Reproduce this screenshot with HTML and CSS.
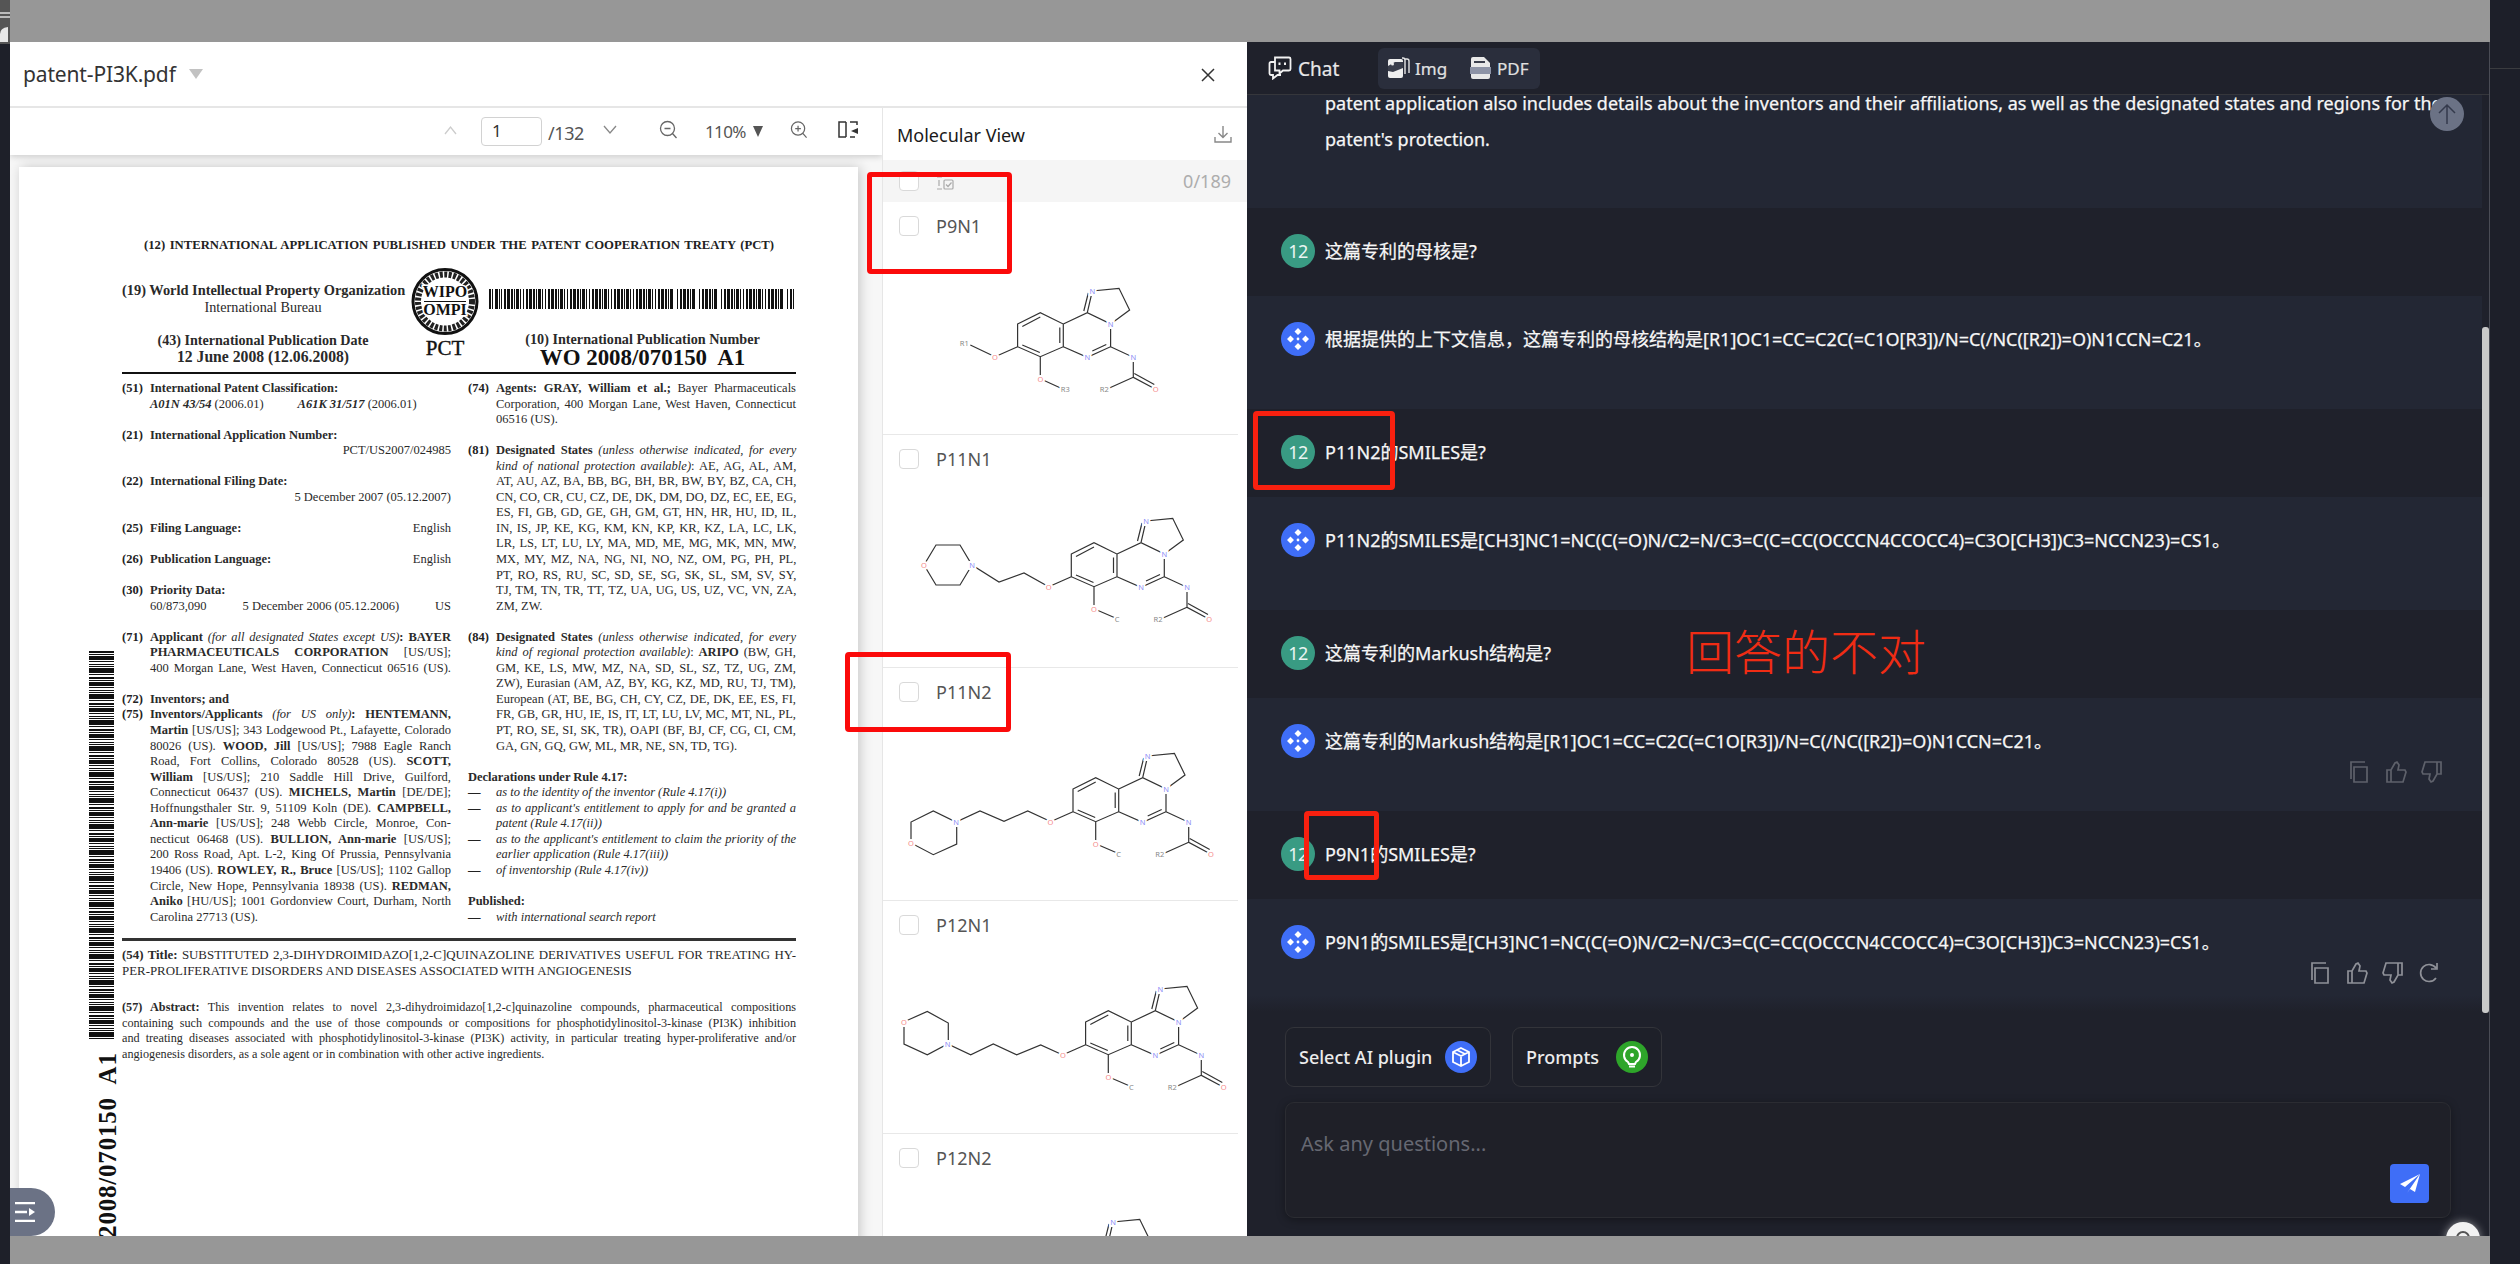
FILE: index.html
```html
<!DOCTYPE html>
<html lang="en">
<head>
<meta charset="utf-8">
<title>patent-PI3K.pdf</title>
<link rel="stylesheet" href="styles.css">
</head>
<body>
<svg class="defs" aria-hidden="true">
  <defs>
    <g id="core">
      <path class="bond" d="M-22.7-11L0-22.3L23-11V11.7L0 21.7L-22.7 11.7ZM-18-8.5L0-18M19.5-7.5V8M-.5 17.5L-18 10M23-11L47-22.3L70.3-11V11.7L47 22.3L23 11.7M47-22.3L52-44L78.7-46.7L89.3-25L70.3-11M43.5-24L48-42M66 9.5L52 16M70.3 11.7L93 22.3V42.3L115.3 54.3M94 38.5L114 49.5M93 42.3L66.3 54.3M-22.7 11.7L-45.3 21.7M0 21.7V43.7"/>
      <text class="at n" x="52" y="-44">N</text>
      <text class="at n" x="70.3" y="-11">N</text>
      <text class="at n" x="47" y="22.3">N</text>
      <text class="at n" x="93" y="22.3">N</text>
      <text class="at o" x="115.3" y="54.3">O</text>
      <text class="at o" x="-45.3" y="21.7">O</text>
      <text class="at o" x="0" y="43.7">O</text>
      <text class="at r" x="64" y="54.3">R2</text>
    </g>
    <g id="logo">
      <path fill="#fff" d="M0-11l3.5 3.5L0-4l-3.5-3.5zM0 4l3.5 3.5L0 11l-3.5-3.5zM-11 0l3.5-3.5L-4 0l-3.5 3.5zM4 0l3.5-3.5L11 0l-3.5 3.5z"/>
      <circle r="1.4" fill="#fff"/>
    </g>
  </defs>
</svg>

<div class="app">
  <div class="strip-left">
    <svg class="corner" width="10" height="44" viewBox="0 0 10 44"><path d="M0 13h10M0 17h10" stroke="#ddd" stroke-width="1.5"/><path d="M0 42V34q0-6 8-7v15z" fill="#e6e6e6"/></svg>
  </div>
  <div class="center">
    <div class="dim-top"></div>
    <div class="modal">
      <section class="doc">
        <header class="doc-head">
          <span class="doc-title">patent-PI3K.pdf</span>
          <span class="doc-caret"></span>
          <svg class="doc-close" width="16" height="16" viewBox="0 0 16 16"><path d="M2 2l12 12M14 2L2 14" stroke="#333" stroke-width="1.5" fill="none"/></svg>
        </header>
        <div class="doc-main">
          <div class="viewer">
            <div class="toolbar">
              <svg class="tb-up" width="15" height="10" viewBox="0 0 15 10"><path d="M2 9l5.5-7L13 9" stroke="#ccc" stroke-width="1.3" fill="none"/></svg>
              <span class="tb-page">1</span>
              <span class="tb-total">/132</span>
              <svg class="tb-down" width="14" height="10" viewBox="0 0 14 10"><path d="M1 1l6 7 6-7" stroke="#888" stroke-width="1.3" fill="none"/></svg>
              <svg class="tb-zout" width="19" height="19" viewBox="0 0 19 19"><circle cx="8.5" cy="8.5" r="7" stroke="#666" fill="none" stroke-width="1.3"/><path d="M5.5 8.5h6M13.5 13.5l4 4.5" stroke="#666" stroke-width="1.3"/></svg>
              <span class="tb-zoom">110%</span>
              <span class="tb-caret"></span>
              <svg class="tb-zin" width="18" height="19" viewBox="0 0 19 19"><circle cx="8.5" cy="8.5" r="7" stroke="#666" fill="none" stroke-width="1.3"/><path d="M5.5 8.5h6M8.5 5.5v6M13.5 13.5l4 4.5" stroke="#666" stroke-width="1.3"/></svg>
              <svg class="tb-sel" width="21" height="17" viewBox="0 0 21 17"><path d="M8 1H1v15h7M8 1v15M12 1h7v3M12 16h5" stroke="#333" stroke-width="1.5" fill="none"/><path d="M20 7l-7 3 7 3z" fill="#333"/></svg>
            </div>
            <div class="viewport">
              <article class="page">
                <div class="side-bar"></div>
                <div class="side-text">WO 2008/070150&nbsp; A1</div>

                <div class="pct-line">(12) INTERNATIONAL APPLICATION PUBLISHED UNDER THE PATENT COOPERATION TREATY (PCT)</div>
                <div class="mast">
                  <div class="mast-left">
                    <div class="m19"><b>(19) World Intellectual Property Organization</b></div>
                    <div class="m-bureau">International Bureau</div>
                    <div class="m43"><b>(43) International Publication Date</b></div>
                    <div class="m-date"><b>12 June 2008 (12.06.2008)</b></div>
                  </div>
                  <div class="mast-mid">
                    <svg class="seal" width="68" height="67" viewBox="0 0 68 67">
                      <ellipse cx="34" cy="33.5" rx="32" ry="32" fill="#fff" stroke="#111" stroke-width="3"/>
                      <ellipse cx="34" cy="33.5" rx="27" ry="27" fill="none" stroke="#222" stroke-width="6" stroke-dasharray="3 1.5"/>
                      <path d="M13 33.5h42" stroke="#111" stroke-width="1"/>
                      <text class="seal-t" x="34" y="29">WIPO</text>
                      <text class="seal-t" x="34" y="47">OMPI</text>
                    </svg>
                    <div class="m-pct">PCT</div>
                  </div>
                  <div class="mast-right">
                    <div class="barcode"></div>
                    <div class="m10"><b>(10) International Publication Number</b></div>
                    <div class="m-wo"><b>WO 2008/070150&nbsp; A1</b></div>
                  </div>
                </div>
                <div class="rule"></div>

                <div class="cols">
                  <div class="col">
                    <div class="it"><span>(51)</span><div><b>International Patent Classification:</b><div class="cls"><span><b><i>A01N 43/54</i></b> (2006.01)</span><span class="cls2"><b><i>A61K 31/517</i></b> (2006.01)</span></div></div></div>
                    <div class="it gap"><span>(21)</span><div><b>International Application Number:</b><div class="rt">PCT/US2007/024985</div></div></div>
                    <div class="it gap"><span>(22)</span><div><b>International Filing Date:</b><div class="rt">5 December 2007 (05.12.2007)</div></div></div>
                    <div class="it gap"><span>(25)</span><div class="sb"><b>Filing Language:</b><span>English</span></div></div>
                    <div class="it gap"><span>(26)</span><div class="sb"><b>Publication Language:</b><span>English</span></div></div>
                    <div class="it gap"><span>(30)</span><div><b>Priority Data:</b><div class="sb"><span>60/873,090</span><span>5 December 2006 (05.12.2006)</span><span>US</span></div></div></div>
                    <div class="it gap"><span>(71)</span><div>
                      <div class="j"><b>Applicant</b> <i>(for all designated States except US)</i><b>: BAYER</b></div>
                      <div class="j"><b>PHARMACEUTICALS CORPORATION</b> [US/US];</div>
                      <div class="j">400 Morgan Lane, West Haven, Connecticut 06516 (US).</div></div></div>
                    <div class="it gap"><span>(72)</span><div><b>Inventors; and</b></div></div>
                    <div class="it"><span>(75)</span><div>
                      <div class="j"><b>Inventors/Applicants</b> <i>(for US only)</i><b>: HENTEMANN,</b></div>
                      <div class="j"><b>Martin</b> [US/US]; 343 Lodgewood Pt., Lafayette, Colorado</div>
                      <div class="j">80026 (US). <b>WOOD, Jill</b> [US/US]; 7988 Eagle Ranch</div>
                      <div class="j">Road, Fort Collins, Colorado 80528 (US). <b>SCOTT,</b></div>
                      <div class="j"><b>William</b> [US/US]; 210 Saddle Hill Drive, Guilford,</div>
                      <div class="j">Connecticut 06437 (US). <b>MICHELS, Martin</b> [DE/DE];</div>
                      <div class="j">Hoffnungsthaler Str. 9, 51109 Koln (DE). <b>CAMPBELL,</b></div>
                      <div class="j"><b>Ann-marie</b> [US/US]; 248 Webb Circle, Monroe, Con-</div>
                      <div class="j">necticut 06468 (US). <b>BULLION, Ann-marie</b> [US/US];</div>
                      <div class="j">200 Ross Road, Apt. L-2, King Of Prussia, Pennsylvania</div>
                      <div class="j">19406 (US). <b>ROWLEY, R., Bruce</b> [US/US]; 1102 Gallop</div>
                      <div class="j">Circle, New Hope, Pennsylvania 18938 (US). <b>REDMAN,</b></div>
                      <div class="j"><b>Aniko</b> [HU/US]; 1001 Gordonview Court, Durham, North</div>
                      <div>Carolina 27713 (US).</div></div></div>
                  </div>
                  <div class="col">
                    <div class="it"><span>(74)</span><div>
                      <div class="j"><b>Agents: GRAY, William et al.;</b> Bayer Pharmaceuticals</div>
                      <div class="j">Corporation, 400 Morgan Lane, West Haven, Connecticut</div>
                      <div>06516 (US).</div></div></div>
                    <div class="it gap"><span>(81)</span><div>
                      <div class="j"><b>Designated States</b> <i>(unless otherwise indicated, for every</i></div>
                      <div class="j"><i>kind of national protection available)</i>: AE, AG, AL, AM,</div>
                      <div class="j">AT, AU, AZ, BA, BB, BG, BH, BR, BW, BY, BZ, CA, CH,</div>
                      <div class="j">CN, CO, CR, CU, CZ, DE, DK, DM, DO, DZ, EC, EE, EG,</div>
                      <div class="j">ES, FI, GB, GD, GE, GH, GM, GT, HN, HR, HU, ID, IL,</div>
                      <div class="j">IN, IS, JP, KE, KG, KM, KN, KP, KR, KZ, LA, LC, LK,</div>
                      <div class="j">LR, LS, LT, LU, LY, MA, MD, ME, MG, MK, MN, MW,</div>
                      <div class="j">MX, MY, MZ, NA, NG, NI, NO, NZ, OM, PG, PH, PL,</div>
                      <div class="j">PT, RO, RS, RU, SC, SD, SE, SG, SK, SL, SM, SV, SY,</div>
                      <div class="j">TJ, TM, TN, TR, TT, TZ, UA, UG, US, UZ, VC, VN, ZA,</div>
                      <div>ZM, ZW.</div></div></div>
                    <div class="it gap"><span>(84)</span><div>
                      <div class="j"><b>Designated States</b> <i>(unless otherwise indicated, for every</i></div>
                      <div class="j"><i>kind of regional protection available)</i>: <b>ARIPO</b> (BW, GH,</div>
                      <div class="j">GM, KE, LS, MW, MZ, NA, SD, SL, SZ, TZ, UG, ZM,</div>
                      <div class="j">ZW), Eurasian (AM, AZ, BY, KG, KZ, MD, RU, TJ, TM),</div>
                      <div class="j">European (AT, BE, BG, CH, CY, CZ, DE, DK, EE, ES, FI,</div>
                      <div class="j">FR, GB, GR, HU, IE, IS, IT, LT, LU, LV, MC, MT, NL, PL,</div>
                      <div class="j">PT, RO, SE, SI, SK, TR), OAPI (BF, BJ, CF, CG, CI, CM,</div>
                      <div>GA, GN, GQ, GW, ML, MR, NE, SN, TD, TG).</div></div></div>
                    <div class="gap"><b>Declarations under Rule 4.17:</b></div>
                    <div class="it"><span>—</span><div><i>as to the identity of the inventor (Rule 4.17(i))</i></div></div>
                    <div class="it"><span>—</span><div>
                      <div class="j"><i>as to applicant's entitlement to apply for and be granted a</i></div>
                      <div><i>patent (Rule 4.17(ii))</i></div></div></div>
                    <div class="it"><span>—</span><div>
                      <div class="j"><i>as to the applicant's entitlement to claim the priority of the</i></div>
                      <div><i>earlier application (Rule 4.17(iii))</i></div></div></div>
                    <div class="it"><span>—</span><div><i>of inventorship (Rule 4.17(iv))</i></div></div>
                    <div class="gap"><b>Published:</b></div>
                    <div class="it"><span>—</span><div><i>with international search report</i></div></div>
                  </div>
                </div>
                <div class="rule2"></div>
                <div class="full">
                  <div class="j"><b>(54) Title:</b> SUBSTITUTED 2,3-DIHYDROIMIDAZO[1,2-C]QUINAZOLINE DERIVATIVES USEFUL FOR TREATING HY-</div>
                  <div>PER-PROLIFERATIVE DISORDERS AND DISEASES ASSOCIATED WITH ANGIOGENESIS</div>
                </div>
                <div class="full abs">
                  <div class="j"><b>(57) Abstract:</b> This invention relates to novel 2,3-dihydroimidazo[1,2-c]quinazoline compounds, pharmaceutical compositions</div>
                  <div class="j">containing such compounds and the use of those compounds or compositions for phosphotidylinositol-3-kinase (PI3K) inhibition</div>
                  <div class="j">and treating diseases associated with phosphotidylinositol-3-kinase (PI3K) activity, in particular treating hyper-proliferative and/or</div>
                  <div>angiogenesis disorders, as a sole agent or in combination with other active ingredients.</div>
                </div>
              </article>
            </div>
            <button class="handle" type="button" aria-label="Toggle">
              <svg width="22" height="20" viewBox="0 0 22 20"><path d="M1 1h20M1 19h20M1 10h12" stroke="#fff" stroke-width="2.4"/><path d="M15 6l6 4-6 4z" fill="#fff"/></svg>
            </button>
          </div>

          <aside class="mol">
            <div class="mol-head">
              <span class="mol-title">Molecular View</span>
              <svg width="18" height="18" viewBox="0 0 18 18"><path d="M9 1v11M4.5 8L9 12.5 13.5 8M1 12v5h16v-5" stroke="#888" stroke-width="1.4" fill="none"/></svg>
            </div>
            <div class="mol-bar">
              <span class="cb"></span>
              <svg class="bar-ic" width="18" height="14" viewBox="0 0 18 14"><rect x="8" y="4" width="9" height="9" rx="1" fill="none" stroke="#aaa" stroke-width="1.2"/><path d="M10 8.5l2 2 3.5-4M1 1h5M1 13h5M3 4v6" stroke="#aaa" stroke-width="1.2" fill="none"/></svg>
              <span class="bar-count">0/189</span>
            </div>
            <div class="mol-list">
              <div class="mrow">
                <div class="mrow-head"><span class="cb"></span><span class="mname">P9N1</span></div>
                <svg class="msvg" width="355" height="185" viewBox="0 0 355 185">
                  <g transform="translate(157.3 85)">
                    <path class="bond" d="M-45.3 21.7L-70 10M0 43.7L23 54.3"/>
                    <use href="#core"/>
                    <text class="at r" x="-76" y="8">R1</text>
                    <text class="at r" x="25" y="54.3">R3</text>
                  </g>
                </svg>
              </div>
              <div class="mrow">
                <div class="mrow-head"><span class="cb"></span><span class="mname">P11N1</span></div>
                <svg class="msvg" width="355" height="185" viewBox="0 0 355 185">
                  <g transform="translate(211 82)">
                    <path class="bond" d="M-45.3 21.7L-70 8L-95 17L-122 0L-134-20H-158L-170 0L-158 20H-134L-122 0M0 43.7L22.6 53.5"/>
                    <use href="#core"/>
                    <text class="at n" x="-122" y="0">N</text>
                    <text class="at o" x="-170" y="0">O</text>
                    <text class="at r" x="23" y="53.5">C</text>
                  </g>
                </svg>
              </div>
              <div class="mrow">
                <div class="mrow-head"><span class="cb"></span><span class="mname">P11N2</span></div>
                <svg class="msvg" width="355" height="185" viewBox="0 0 355 185">
                  <g transform="translate(212.7 84)">
                    <path class="bond" d="M-45.7 21.3L-68 11L-91.7 21.3L-115.7 11L-139.7 22L-162.4 11L-184.7 22V43L-162.4 54.7L-139 44V22M0 43.7L22.6 53.5"/>
                    <use href="#core"/>
                    <text class="at n" x="-139.7" y="22">N</text>
                    <text class="at o" x="-184.7" y="43">O</text>
                    <text class="at r" x="23" y="53.5">C</text>
                  </g>
                </svg>
              </div>
              <div class="mrow">
                <div class="mrow-head"><span class="cb"></span><span class="mname">P12N1</span></div>
                <svg class="msvg" width="355" height="185" viewBox="0 0 355 185">
                  <g transform="translate(225.3 84)">
                    <path class="bond" d="M-46 21.8L-67.6 12L-91.6 21.8L-115 11L-137.6 21.8L-160.6 11L-181 21.8L-204.3 11V-11.2L-181-21.5L-160-10V11M0 43.7L22.6 53.5"/>
                    <use href="#core"/>
                    <text class="at n" x="-160.6" y="11">N</text>
                    <text class="at o" x="-204.3" y="-11.2">O</text>
                    <text class="at r" x="23" y="53.5">C</text>
                  </g>
                </svg>
              </div>
              <div class="mrow">
                <div class="mrow-head"><span class="cb"></span><span class="mname">P12N2</span></div>
                <svg class="msvg" width="355" height="185" viewBox="0 0 355 185">
                  <g transform="translate(178 84)"><use href="#core"/></g>
                </svg>
              </div>
            </div>
          </aside>
        </div>
      </section>

      <section class="chat">
        <header class="chat-head">
          <svg class="chat-ic" width="24" height="24" viewBox="0 0 24 24"><path d="M7 1.5h14a1.5 1.5 0 0 1 1.500 1.500v10a1.500 1.500 0 0 1-1.500 1.500h-6l-3.500 3v-3H7z" fill="none" stroke="#f2f2f2" stroke-width="1.8"/><path d="M7 6H3A1.500 1.500 0 0 0 1.500 7.500v10A1.500 1.500 0 0 0 3 19h2v3.500L9.500 19H13" fill="none" stroke="#f2f2f2" stroke-width="1.8"/><path d="M11.500 6.500v2.500M17 6.500v2.500" stroke="#f2f2f2" stroke-width="2"/></svg>
          <span class="chat-label">Chat</span>
          <div class="pill">
            <svg class="pill-ic1" width="23" height="22" viewBox="0 0 23 22"><path d="M18 2h2a2 2 0 0 1 2 2v12M15 1h1a2 2 0 0 1 2 2v14" fill="none" stroke="#e6e6e6" stroke-width="1.4"/><rect x="1" y="2" width="15" height="19" rx="2" fill="#eee"/><path d="M1 9l7-4h8v6L6 15 1 14z" fill="#3a3e4c"/><circle cx="5.5" cy="7" r="1.5" fill="#eee"/></svg>
            <span class="pill-t img">Img</span>
            <svg class="pill-ic2" width="21" height="24" viewBox="0 0 21 24"><path d="M3 1h11l6 6v4H1V3a2 2 0 0 1 2-2z" fill="#e8e8e8"/><rect x="0" y="11" width="21" height="7" fill="#8d93a6"/><path d="M1 18h19v3a2 2 0 0 1-2 2H3a2 2 0 0 1-2-2z" fill="#e8e8e8"/><rect x="4" y="5" width="11" height="2" fill="#3a3e4c"/></svg>
            <span class="pill-t pdf">PDF</span>
          </div>
        </header>
        <div class="chat-scroll">
          <div class="row ai first">
            <div class="row-text">
              <p class="clip">patent application also includes details about the inventors and their affiliations, as well as the designated states and regions for the</p>
              <p>patent's protection.</p>
            </div>
          </div>
          <div class="row user"><span class="av u">12</span><p>这篇专利的母核是?</p></div>
          <div class="row ai"><svg class="av-svg" width="34" height="34" viewBox="-17 -17 34 34"><circle r="17" fill="#3f6ef7"/><use href="#logo"/></svg><p>根据提供的上下文信息，这篇专利的母核结构是[R1]OC1=CC=C2C(=C1O[R3])/N=C(/NC([R2])=O)N1CCN=C21。</p></div>
          <div class="row user"><span class="av u">12</span><p>P11N2的SMILES是?</p></div>
          <div class="row ai"><svg class="av-svg" width="34" height="34" viewBox="-17 -17 34 34"><circle r="17" fill="#3f6ef7"/><use href="#logo"/></svg><p>P11N2的SMILES是[CH3]NC1=NC(C(=O)N/C2=N/C3=C(C=CC(OCCCN4CCOCC4)=C3O[CH3])C3=NCCN23)=CS1。</p></div>
          <div class="row user"><span class="av u">12</span><p>这篇专利的Markush结构是?</p></div>
          <div class="row ai"><svg class="av-svg" width="34" height="34" viewBox="-17 -17 34 34"><circle r="17" fill="#3f6ef7"/><use href="#logo"/></svg><p>这篇专利的Markush结构是[R1]OC1=CC=C2C(=C1O[R3])/N=C(/NC([R2])=O)N1CCN=C21。</p>
            <div class="acts dim">
              <svg width="22" height="24" viewBox="0 0 22 24"><use href="#ic-copy"/></svg>
              <svg width="22" height="24" viewBox="0 0 22 24"><use href="#ic-like"/></svg>
              <svg width="22" height="24" viewBox="0 0 22 24"><use href="#ic-dislike"/></svg>
            </div>
          </div>
          <div class="row user"><span class="av u">12</span><p>P9N1的SMILES是?</p></div>
          <div class="row ai last"><svg class="av-svg" width="34" height="34" viewBox="-17 -17 34 34"><circle r="17" fill="#3f6ef7"/><use href="#logo"/></svg><p>P9N1的SMILES是[CH3]NC1=NC(C(=O)N/C2=N/C3=C(C=CC(OCCCN4CCOCC4)=C3O[CH3])C3=NCCN23)=CS1。</p>
            <div class="acts">
              <svg width="22" height="24" viewBox="0 0 22 24"><g id="ic-copy"><path d="M5 22V7h13v15zM2 19V2h14" fill="none" stroke="currentColor" stroke-width="1.7"/></g></svg>
              <svg width="22" height="24" viewBox="0 0 22 24"><g id="ic-like"><path d="M6 10h-4v12h16l3-10-1-2h-7l1-5-2-3-2 1zM6 10v12" fill="none" stroke="currentColor" stroke-width="1.7"/></g></svg>
              <svg width="22" height="24" viewBox="0 0 22 24"><g id="ic-dislike"><path d="M16 14h4V2H4L1 12l1 2h7l-1 5 2 3 2-1zM16 14V2" fill="none" stroke="currentColor" stroke-width="1.7"/></g></svg>
              <svg width="22" height="24" viewBox="0 0 22 24"><path d="M18 17a8.500 8.500 0 1 1 0-10M19 2v6h-6" fill="none" stroke="currentColor" stroke-width="1.7"/></svg>
            </div>
          </div>
        </div>
        <footer class="chat-foot">
          <div class="foot-btns">
            <button class="fbtn plugin" type="button"><span>Select AI plugin</span>
              <svg width="32" height="32" viewBox="0 0 32 32"><circle cx="16" cy="16" r="16" fill="#3f6ef7"/><path d="M16 7l8 4v10l-8 4-8-4V11zM8 11l8 4 8-4M16 15v10M12 9l8 4" fill="none" stroke="#fff" stroke-width="1.8"/></svg>
            </button>
            <button class="fbtn prompts" type="button"><span>Prompts</span>
              <svg width="32" height="32" viewBox="0 0 32 32"><circle cx="16" cy="16" r="16" fill="#2ea52a"/><path d="M12 21a8 8 0 1 1 8 0l-1 2h-6z" fill="none" stroke="#fff" stroke-width="2"/><path d="M13 25.500h6" stroke="#fff" stroke-width="2"/><circle cx="16" cy="14" r="2" fill="#fff"/></svg>
            </button>
          </div>
          <div class="ask">
            <span class="ask-ph">Ask any questions...</span>
            <button class="send" type="button" aria-label="Send">
              <svg width="22" height="22" viewBox="0 0 22 22"><path d="M21 1L1 11l5 3 2 6 3-4 5 3zM6 14L21 1 8 20" fill="#fff"/></svg>
            </button>
          </div>
        </footer>
        <button class="to-top" type="button" aria-label="Top">
          <svg width="20" height="22" viewBox="0 0 20 22"><path d="M10 21V2M2 10l8-8 8 8" stroke="#343a4c" stroke-width="1.5" fill="none"/></svg>
        </button>
        <div class="chat-scrollbar"></div>
        <div class="help"></div>
      </section>
    </div>
    <div class="dim-bottom"></div>
  </div>
  <div class="strip-right"><i class="sr-line"></i></div>
</div>

<div class="mark m1"></div>
<div class="mark m2"></div>
<div class="mark m3"></div>
<div class="mark m4"></div>
<div class="mark-note">回答的不对</div>
</body>
</html>
```
FILE: styles.css
```css
*{box-sizing:border-box}
html,body{margin:0;padding:0}
body{width:2520px;height:1264px;overflow:hidden;position:relative;background:#1d1f29;font-family:"Noto Sans","Noto Sans CJK SC",sans-serif}
p{margin:0}
button{font:inherit;border:0;padding:0;background:none;color:inherit}
.defs{position:absolute;width:0;height:0}

.app{display:flex;width:2520px;height:1264px}
.strip-left{width:10px;background:#1e2029;flex:none}
.corner{display:block;background:#555}
.center{width:2480px;flex:none;display:flex;flex-direction:column}
.strip-right{width:30px;flex:none;background:#1d1f29;padding-top:68px}
.sr-line{display:block;height:1px;background:#3a3b3f}
.dim-top{height:42px;background:#979797;flex:none}
.dim-bottom{height:28px;background:#979797;flex:none}
.modal{height:1194px;display:flex;overflow:hidden;flex:none}

/* document side */
.doc{width:1237px;flex:none;background:#fff;display:flex;flex-direction:column}
.doc-head{height:66px;flex:none;display:flex;align-items:center;padding:0 31px 0 13px;border-bottom:2px solid #e6e6e6}
.doc-title{font-size:21px;color:#333;letter-spacing:-.15px}
.doc-caret{margin-left:13px;width:0;height:0;border:7.5px solid transparent;border-top:10px solid #c2c2c2;border-bottom:0}
.doc-close{margin-left:auto;margin-top:2px}
.doc-main{flex:1;display:flex;min-height:0}
.viewer{width:873px;flex:none;display:flex;flex-direction:column;position:relative;overflow:hidden;border-right:1px solid #e6e6e6}
.toolbar{height:47px;flex:none;background:#fff;display:flex;align-items:center;padding-left:433px;box-shadow:0 2px 6px rgba(0,0,0,.16);position:relative;z-index:2;color:#444;font-size:18px}
.tb-up{margin-bottom:4px}
.tb-page{margin-left:23px;width:61px;height:29px;border:1.5px solid #d2d2d2;border-radius:4px;padding-left:10px;line-height:26px;font-size:17px;color:#333}
.tb-total{margin-left:6px;width:37px;color:#555;margin-top:3px;letter-spacing:-.4px}
.tb-down{margin-left:18px;margin-bottom:4px}
.tb-zout{margin-left:42px;margin-bottom:4px}
.tb-zoom{margin-left:27px;width:42px;font-size:17px;letter-spacing:-.6px;color:#555}
.tb-caret{margin-left:6px;border:5px solid transparent;border-top:11px solid #555;border-bottom:0}
.tb-zin{margin-left:27px;margin-bottom:4px}
.tb-sel{margin-left:30px;margin-bottom:4px}
.viewport{flex:1;background:#f7f7f7;padding:12px 24px 0 9px;min-height:0}
.page{position:relative;height:1100px;background:#fff;box-shadow:2px 0 12px rgba(0,0,0,.2);padding:70px 62px 0 103px;font-family:"Liberation Serif",serif;font-size:12.5px;line-height:15.55px;color:#2a2a2a;overflow:hidden}
.pct-line{width:630px;margin-left:22px;line-height:16px;font-size:12.7px;font-weight:700;text-align:justify;text-align-last:justify;color:#222;white-space:nowrap}
.mast{display:flex;height:104px;margin-top:15px}
.mast-left{width:282px;text-align:center;padding-top:14px}
.m19{font-size:14.4px;line-height:17px;white-space:nowrap;text-align:left}
.m-bureau{font-size:14.2px;line-height:17px}
.m43{font-size:14.1px;line-height:16px;margin-top:16px;white-space:nowrap}
.m-date{font-size:15.7px;line-height:17px}
.mast-mid{width:85px;display:flex;flex-direction:column;align-items:center;padding-right:3px}
.seal{display:block}
.seal-t{font-family:"Liberation Serif",serif;font-size:16px;font-weight:700;text-anchor:middle;fill:#111;paint-order:stroke;stroke:#fff;stroke-width:3px}
.m-pct{font-size:21px;line-height:24px;margin-top:1px;color:#111;-webkit-text-stroke:.4px #111}
.mast-right{flex:1;padding-top:21px;text-align:center}
.barcode{width:305px;height:20px;background:repeating-linear-gradient(90deg,#111 0 2px,#fff 2px 3px,#111 3px 4px,#fff 4px 5.5px,#111 5.5px 8.5px,#fff 8.5px 9.5px,#111 9.5px 10.5px,#fff 10.5px 12px,#111 12px 13px,#fff 13px 15px,#111 15px 17px,#fff 17px 18px,#111 18px 21px,#fff 21px 22px)}
.m10{font-size:14.2px;line-height:16px;margin-top:22px;white-space:nowrap}
.m-wo{font-size:22.9px;line-height:24px;margin-top:-1px;color:#111}
.rule{height:2px;background:#111}
.cols{display:grid;grid-template-columns:329px 328px;column-gap:17px;margin-top:7px}
.it{display:grid;grid-template-columns:28px 1fr}
.gap{margin-top:15.55px}
.it>span{color:#222;font-weight:700}
.j{text-align:justify;text-align-last:justify;white-space:nowrap}
.rt{text-align:right}
.sb{display:flex;justify-content:space-between}
.cls{display:flex}
.cls2{margin-left:34px}
.rule2{height:3px;background:#333;margin-top:13px}
.full{margin-top:7px;font-size:12.9px}
.full.abs{margin-top:21px;font-size:12.2px}
.side-bar{position:absolute;left:70px;top:484px;width:24.5px;height:390px;background:repeating-linear-gradient(180deg,#111 0 2px,#fff 2px 3px,#111 3px 4px,#fff 4px 5px,#111 5px 9px,#fff 9px 10px,#111 10px 11px,#fff 11px 13px,#111 13px 14px,#fff 14px 15px,#111 15px 16px,#fff 16px 17px,#111 17px 22px,#fff 22px 23px,#111 23px 24px,#fff 24px 26px)}
.side-text{position:absolute;left:76px;top:884px;height:240px;writing-mode:vertical-rl;transform:rotate(180deg);font-size:25px;line-height:26px;font-weight:700;color:#111;white-space:nowrap;letter-spacing:.8px;text-align:left}
.handle{position:absolute;left:0;bottom:0;width:45px;height:48px;background:#6b7285;border-radius:0 24px 24px 0;display:flex;align-items:center;padding-left:4px;z-index:3}

/* molecule list */
.mol{width:364px;flex:none;display:flex;flex-direction:column;position:relative;overflow:hidden;background:#fff}
.mol-head{height:52px;flex:none;display:flex;align-items:center;justify-content:space-between;padding:0 15px 0 14px}
.mol-title{font-size:18px;color:#1a1a1a;margin-top:2px}
.mol-bar{height:42px;flex:none;background:#f5f5f5;display:flex;align-items:center;padding:0 16px;color:#aaa}
.bar-ic{margin-left:17px;margin-top:4px}
.bar-count{margin-left:auto;font-size:18px;color:#adadad}
.mol-list{flex:1;min-height:0}
.mrow{height:233px;width:355px;border-bottom:1.5px solid #e8e8e8}
.mrow-head{height:48px;display:flex;align-items:center;padding-left:16px}
.cb{width:20px;height:20px;border:1.5px solid #d9d9d9;border-radius:4px;background:#fff;flex:none}
.mname{margin-left:17px;font-size:18px;color:#555}
.msvg{display:block}
.bond{fill:none;stroke:#333;stroke-width:1.2}
.at{font-family:"Noto Sans",sans-serif;font-size:7.5px;text-anchor:middle;dominant-baseline:central;paint-order:stroke;stroke:#fff;stroke-width:4px}
.at.n{fill:#8b8bf5}
.at.o{fill:#f58b8b}
.at.r{fill:#888}

/* chat side */
.chat{width:1243px;flex:none;background:#1f212b;display:flex;flex-direction:column;position:relative;overflow:hidden;border-right:1px solid #4a4c55;color:#f0f0f0}
.chat-head{height:53px;flex:none;display:flex;align-items:center;padding-left:21px;border-bottom:1px solid #35363b;background:#1f212b;position:relative;z-index:2}
.chat-ic{flex:none}
.chat-label{margin-left:6px;width:45px;font-size:19px;line-height:26px;margin-top:2px;color:#e8e8e8;-webkit-text-stroke:.2px #e8e8e8}
.pill{margin-left:35px;width:162px;height:41px;border-radius:6px;background:#2a2e3c;display:flex;align-items:center;padding-left:9px}
.pill-t{font-size:17px;color:#e0e0e0;-webkit-text-stroke:.2px #e0e0e0}
.pill-t.img{margin-left:5px;width:32px}
.pill-ic2{margin-left:23px}
.pill-t.pdf{margin-left:6px}
.chat-scroll{height:918px;flex:none;overflow:hidden}
.row{position:relative;width:1235px;display:flex;align-items:flex-start;padding:26px 0 0 34px;font-size:18px;line-height:34px;color:#f6f6f6;-webkit-text-stroke:.25px #f6f6f6}
.row p{margin-left:10px;white-space:nowrap}
.row.user{height:88px;background:#1f212b}
.row.ai{height:113px;background:#232734}
.row.first{height:113px;padding:0 0 0 78px}
.row-text{margin-top:-10px}
.row-text p{margin:0;line-height:36px;width:1117px;overflow:hidden}
.row.last{background:linear-gradient(180deg,#232734 85%,#1f212b 100%)}
.av{width:34px;height:34px;border-radius:50%;flex:none;display:flex;align-items:center;justify-content:center;font-size:18px;letter-spacing:-.5px;line-height:1;-webkit-text-stroke:0}
.av.u{background:#399b83;color:#eaf5f2}
.av-svg{flex:none;display:block}
.acts{position:absolute;right:42px;top:62px;display:flex;gap:14px;color:#8f9198}
.acts svg{display:block}
.acts.dim{opacity:.55;right:39px}
.chat-foot{flex:1;padding:14px 0 0 38px}
.foot-btns{display:flex;gap:21px}
.fbtn{height:60px;border:1.5px solid #33343a;border-radius:9px;background:#1e2029;display:flex;align-items:center;justify-content:space-between;padding:0 13px;font-size:18px;font-weight:500;color:#ececec}
.fbtn.plugin{width:206px}
.fbtn.prompts{width:150px}
.ask{position:relative;width:1166px;height:116px;margin-top:15px;background:#1f2028;border:1.5px solid #2b2c32;border-radius:9px;padding:26px 15px;box-shadow:0 2px 8px rgba(0,0,0,.35);font-size:20px;line-height:30px;color:#666872}
.send{position:absolute;right:21px;bottom:14px;width:39px;height:39px;border-radius:4px;background:#3f6ef7;display:flex;align-items:center;justify-content:center}
.to-top{position:absolute;left:1183px;top:55px;width:34px;height:34px;border-radius:50%;background:#6b7285;display:flex;align-items:center;justify-content:center;z-index:3}
.chat-scrollbar{position:absolute;left:1235px;top:285px;width:7px;height:686px;background:#c9c9c9;border-radius:3px}
.help{position:absolute;left:1199px;top:1180px;width:34px;height:34px;border-radius:50%;background:#f2f2f2;box-shadow:0 0 8px rgba(255,255,255,.5);display:flex;justify-content:center;padding-top:9px}
.help::before{content:"";width:10px;height:10px;border:2px solid #555;border-radius:50%}

/* reviewer's red marks on the screenshot */
.mark{position:absolute;border:5px solid #fb0a0a;border-radius:4px}
.m1{left:867px;top:172px;width:145px;height:102px}
.m2{left:845px;top:652px;width:166px;height:80px}
.m3{left:1253px;top:411px;width:142px;height:79px;border-color:#f8200f}
.m4{left:1304px;top:811px;width:75px;height:69px;border-color:#f8200f}
.mark-note{position:absolute;left:1686px;top:613px;font-family:"Noto Sans CJK SC",sans-serif;font-size:48px;line-height:72px;color:#f02c14;font-weight:300}
```
